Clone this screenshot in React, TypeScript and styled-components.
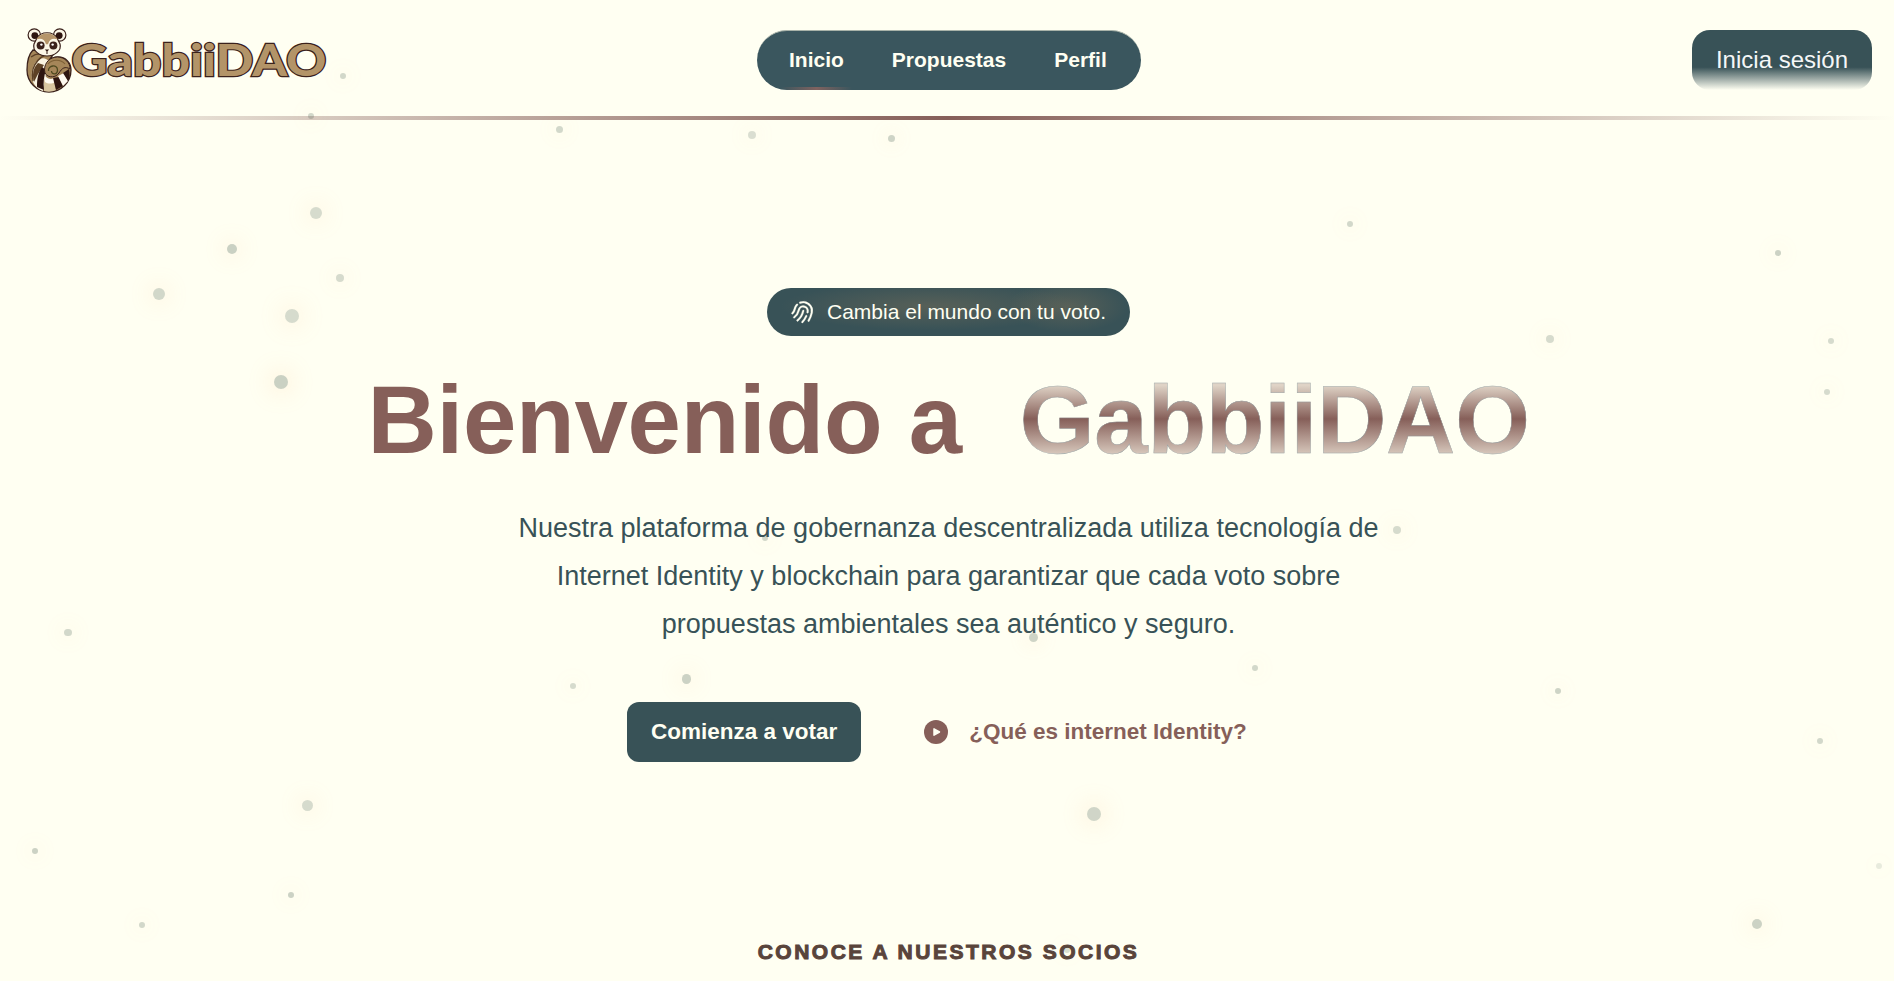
import React from "react";
import styled, { createGlobalStyle } from "styled-components";
import { HiMiniFingerPrint } from "react-icons/hi2";

const teal = "#385257";
const brown = "#865f59";
const cream = "#fffff2";
const outline = "#3a211b";

const GlobalStyle = createGlobalStyle`
  * { box-sizing: border-box; }
  html, body { margin: 0; background: ${cream}; overflow: hidden; }
  body { font-family: "Liberation Sans", Arial, sans-serif; }
`;

const Page = styled.div`
  position: relative;
  height: 981px;
  overflow: hidden;
  display: flex;
  flex-direction: column;
`;

const Header = styled.header`
  display: grid;
  grid-template-columns: 1fr auto 1fr;
  align-items: center;
  height: 120px;
  padding: 4px 22px 0 24px;
  border-bottom: 4px solid;
  border-image: linear-gradient(90deg, transparent, ${brown} 50%, transparent) 1;
`;

const Logo = styled.svg`
  display: block;
  width: 310px;
  height: 70px;
`;

const LogoText = styled.text`
  font-family: Lato, "Liberation Sans", sans-serif;
  font-size: 44px;
  font-weight: 900;
  fill: #b39468;
  stroke: ${outline};
  stroke-width: 2.4px;
  paint-order: stroke;
`;

const Nav = styled.nav`
  display: flex;
  align-items: center;
  gap: 48px;
  width: 384px;
  height: 60px;
  margin-left: 2px;
  padding: 0 32px 2px;
  border-radius: 30px;
  background: #3a565e;
  border-top: 1px solid #a9b3a9;
  overflow: hidden;
`;

const NavLink = styled.a<{ $active?: boolean }>`
  display: flex;
  position: relative;
  align-items: center;
  height: 60px;
  color: ${cream};
  font-size: 21px;
  font-weight: 700;
  &::after {
    content: "";
    display: ${(p) => (p.$active ? "block" : "none")};
    position: absolute;
    bottom: 0;
    left: -8px;
    right: -8px;
    height: 3px;
    background: linear-gradient(90deg, transparent, #80625f, transparent);
  }
`;

const LoginButton = styled.button`
  justify-self: end;
  width: 180px;
  height: 60px;
  border: 0;
  border-radius: 18px;
  color: #f5f7f7;
  background: linear-gradient(180deg, ${teal} 62%, ${cream} 100%);
  font: 24px "Liberation Sans", sans-serif;
`;

const Hero = styled.main`
  display: flex;
  flex-direction: column;
  align-items: center;
  padding-top: 168px;
  padding-left: 3px;
`;

const Badge = styled.div`
  display: flex;
  align-items: center;
  gap: 12px;
  width: 363px;
  height: 48px;
  padding-left: 24px;
  border-radius: 24px;
  color: ${cream};
  font-size: 21px;
  white-space: nowrap;
  background:
    radial-gradient(ellipse 60px 26px at 83% 38%, rgba(134, 117, 89, 0.4), transparent),
    radial-gradient(ellipse 150px 24px at 45% 38%, rgba(134, 117, 89, 0.4), transparent),
    ${teal};
`;

const BadgeIcon = styled(HiMiniFingerPrint)`
  width: 24px;
  height: 24px;
  transform: rotate(12deg);
  stroke: currentColor;
  stroke-width: 0.2px;
`;

const Title = styled.h1`
  display: flex;
  gap: 58px;
  margin: 30px 0 0;
  color: ${brown};
  font-size: 96px;
  line-height: 108px;
  letter-spacing: -0.25px;
  white-space: nowrap;
`;

const Brand = styled.span`
  color: transparent;
  background: linear-gradient(180deg, #dfd3c6 18%, ${brown} 49%, #d8c9bd 82%);
  background-clip: text;
  -webkit-background-clip: text;
  -webkit-text-stroke: 0.5px rgba(120, 150, 160, 0.55);
`;

const Lead = styled.p`
  width: 900px;
  margin: 30px 0 0;
  color: ${teal};
  font-size: 27px;
  line-height: 48px;
  text-align: center;
`;

const Actions = styled.div`
  display: flex;
  align-items: center;
  gap: 63px;
  margin-top: 54px;
`;

const StartButton = styled.button`
  width: 234px;
  height: 60px;
  border: 0;
  border-radius: 12px;
  color: ${cream};
  background: ${teal};
  font: 700 22.5px "Liberation Sans", sans-serif;
`;

const InfoLink = styled.a`
  display: flex;
  align-items: center;
  gap: 21px;
  padding-right: 23px;
  color: ${brown};
  font-size: 22.5px;
  font-weight: 700;
`;

const Partners = styled.h2`
  margin: 176px 0 0;
  color: #59443b;
  font-size: 21px;
  line-height: 28px;
  letter-spacing: 2.5px;
  -webkit-text-stroke: 1px #59443b;
`;

const Dot = styled.i<{ $x: number; $y: number; $d: number; $o?: number }>`
  position: absolute;
  left: ${(p) => p.$x - p.$d / 2}px;
  top: ${(p) => p.$y - p.$d / 2}px;
  width: ${(p) => p.$d}px;
  height: ${(p) => p.$d}px;
  border-radius: 50%;
  background: #38503f;
  opacity: ${(p) => p.$o ?? 0.22};
  box-shadow: 0 0 ${(p) => p.$d * 0.5 + 16}px ${(p) => p.$d * 0.35 - 1}px rgba(255, 190, 130, 0.9);
  pointer-events: none;
`;

const dots: [number, number, number, number?][] = [
  [343, 75.5, 6], [311, 116, 6], [559, 129, 7], [751.5, 134.5, 8, 0.18], [891, 138, 7, 0.24],
  [316, 213, 12, 0.2], [232, 249, 10, 0.26], [340, 278, 8, 0.2], [158.5, 294, 12, 0.22],
  [291.5, 316, 14, 0.2], [281, 382, 14, 0.26], [1349.5, 223.5, 6], [1778, 252.5, 6, 0.25],
  [1550, 339, 8, 0.2], [1831, 341, 6, 0.2], [1827, 391.5, 6, 0.2], [1397, 529.5, 8, 0.2],
  [1557.5, 690.5, 6, 0.24], [1820, 740.5, 6], [1879, 866, 6, 0.11], [1757, 924, 10, 0.25],
  [68, 632.5, 7.5, 0.22], [307.5, 805.5, 11.5, 0.2], [34.5, 851, 6, 0.25], [291, 895, 6, 0.25],
  [142, 925, 6, 0.22], [686.5, 679, 9.5, 0.25], [1033, 637, 9, 0.24], [1255, 668, 6], [573, 685.5, 6, 0.2],
  [1094, 813.5, 14, 0.23], [765, 538, 6, 0.22], [1067, 950, 6, 0.18],
];

const BackDot = styled(Dot)`
  z-index: -1;
`;

function LogoMark() {
  return (
    <Logo viewBox="0 0 310 70" role="img" aria-label="GabbiiDAO">
      <path d="M9 25C4 30 3 38 3 45a22 22 0 0 0 44 0c0-7-5-13-13-13-3 0-5 1-8 2l5-7z" fill="#a58659" stroke={outline} strokeWidth="1.3" />
      <path d="M11 38c5-6 11-6 14-1l-2 6-4 23C7 62 5 48 11 38z" fill="#faf4e2" />
      <path d="M14 38l6 2-6 9-4 8c-2-7-1-14 4-19z" fill="#5d4126" />
      <path d="M18 42l4 3c-2 6-3 12-2 20l-7-3c0-8 1-14 5-20z" fill="#2e1510" />
      <path d="M21 52c3 3 6 3 9 1l2 12c-4 2-8 2-12 1 0-5 0-9 1-14z" fill="#d9c6a0" />
      <path d="M21 51c3 3 6 4 9 2l1 4c-3 2-7 2-10 0z" fill="#fffaf0" />
      <path d="M29 53l6-1 4 9-7 4z" fill="#2e1510" />
      <path d="M34 51l6-3 4 8-5 5z" fill="#fffaf0" />
      <path d="M39 48l6-4c1 5 1 9-1 12z" fill="#2e1510" />
      <path d="M20.500 45c0-8 6-13 13-13s13 6 12.500 12c-5-3-8-1-11 4-4 6-14.500 5-14.500-3z" fill="#a58659" stroke={outline} strokeWidth="1" />
      <path d="M24.500 46c-.5-6 9-7 9-1 0 5-6 5-6 1" fill="none" stroke="#4f4a20" strokeWidth="1.300" />
      <path d="M24 39c4-5 13-5 17 0" fill="none" stroke="#7d6036" strokeWidth="1.200" />
      <path d="M7 32c4-3 9-4 14-2-6 3-10 8-12 14-1 4-1 8 0 12" fill="none" stroke="#5d4126" strokeWidth="1.400" />
      <g stroke={outline} strokeWidth="1.200">
        <circle cx="10.3" cy="10" r="6.2" fill="#fbf6e6" />
        <circle cx="35.7" cy="10" r="6.2" fill="#fbf6e6" />
        <path d="M13 13c4-7 16-7 20 0l3 6c2 7-6 12-13 12S8 26 10 19z" fill="#fbf6e6" />
      </g>
      <circle cx="10.8" cy="10.6" r="3.4" fill="#2e1510" />
      <circle cx="35.2" cy="10.6" r="3.4" fill="#2e1510" />
      <path d="M12.500 14.200c4-7.500 17-7.500 21 0-5-1.500-8 0-9.500 5h-2c-1.500-5-4.500-6.500-9.500-5z" fill="#b6966b" />
      <circle cx="16.600" cy="20.400" r="4" fill={outline} />
      <circle cx="29.400" cy="20.400" r="4" fill={outline} />
      <circle cx="17.400" cy="19.600" r="1.200" fill="#fff" />
      <circle cx="28.600" cy="19.600" r="1.200" fill="#fff" />
      <path d="M20.800 24.600h4.400l-2.200 2.200zM22.500 26h1v3h-1z" fill="#2e1510" />
      <LogoText x="47.5" y="51" textLength="255" lengthAdjust="spacingAndGlyphs">GabbiiDAO</LogoText>
    </Logo>
  );
}

export default function App() {
  return (
    <Page>
      <GlobalStyle />
      <Header>
        <LogoMark />
        <Nav>
          <NavLink $active>Inicio</NavLink>
          <NavLink>Propuestas</NavLink>
          <NavLink>Perfil</NavLink>
        </Nav>
        <LoginButton>Inicia sesión</LoginButton>
      </Header>
      <Hero>
        <Badge><BadgeIcon />Cambia el mundo con tu voto.</Badge>
        <Title><span>Bienvenido a</span><Brand>GabbiiDAO</Brand></Title>
        <Lead>
          Nuestra plataforma de gobernanza descentralizada utiliza tecnología de Internet Identity y
          blockchain para garantizar que cada voto sobre propuestas ambientales sea auténtico y seguro.
        </Lead>
        <Actions>
          <StartButton>Comienza a votar</StartButton>
          <InfoLink>
            <svg width="24" height="24" viewBox="0 0 24 24"><circle cx="12" cy="12" r="12" fill={brown} /><path d="M10 8.800v6.400l5.500-3.200z" fill={cream} stroke={cream} strokeWidth="1.500" strokeLinejoin="round" /></svg>
            ¿Qué es internet Identity?
          </InfoLink>
        </Actions>
        <Partners>CONOCE A NUESTROS SOCIOS</Partners>
      </Hero>
      {dots.map(([x, y, d, o], i) => <Dot key={i} $x={x} $y={y} $d={d} $o={o} />)}
      <BackDot $x={769.5} $y={296} $d={6} />
    </Page>
  );
}
